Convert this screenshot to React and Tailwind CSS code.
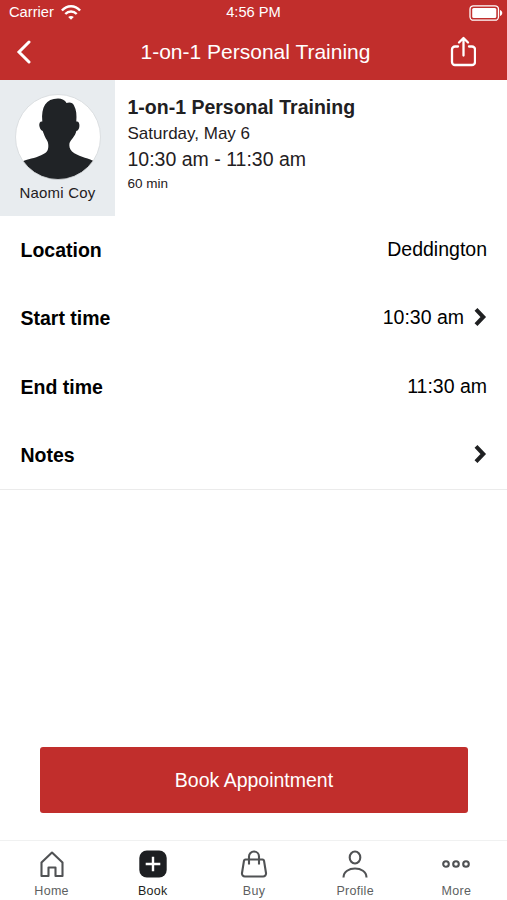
const details = [
  { label: "Location", value: "Deddington" },
  { label: "Start time", value: "10:30 am", arrow: true },
  { label: "End time", value: "11:30 am" },
  { label: "Notes", value: "", arrow: true },
]

function Chevron() {
  return (
    <svg className="ml-[10px] mb-[2px]" width="13" height="20" viewBox="0 0 13 20" fill="none"
      stroke="#1f2022" strokeWidth="4">
      <path d="M2 2.3 9.3 10 2 17.7" />
    </svg>
  )
}

function StatusBar() {
  return (
    <div className="grid grid-cols-3 items-center h-6 pt-px pl-[9px] pr-1 text-[14.7px] leading-none">
      <div className="flex items-center gap-[7px]">
        <span>Carrier</span>
        <svg width="20" height="15" viewBox="0 0 20 15" fill="none" stroke="white" strokeWidth="2.4">
          <path d="M.9 5.5C6-.2 14-.2 19.1 5.5" />
          <path d="M4.3 9c3.2-3.3 8.2-3.3 11.4 0" />
          <path d="M10 14.8 7.2 12c1.5-1.5 4.1-1.5 5.6 0Z" fill="white" stroke="none" />
        </svg>
      </div>
      <span className="text-center pr-[5px]">4:56 PM</span>
      <svg className="justify-self-end" width="34" height="16" viewBox="0 0 34 16">
        <rect x="1" y=".8" width="28.5" height="14.4" rx="3.5" fill="none" stroke="white" strokeWidth="1.3" />
        <rect x="3.2" y="3" width="24.1" height="10" rx="1.5" fill="white" />
        <path d="M31 5c3 .8 3 5.200 0 6Z" fill="white" />
      </svg>
    </div>
  )
}

function TitleBar() {
  return (
    <div className="grid grid-cols-[60px_1fr_60px] items-center h-14">
      <svg className="ml-4" width="16" height="24" viewBox="0 0 16 24" fill="none" stroke="white"
        strokeWidth="3" strokeLinecap="round">
        <path d="M13 2 3 12l10 10" />
      </svg>
      <h1 className="text-[21px] text-center pl-1">1-on-1 Personal Training</h1>
      <svg className="ml-[3px]" width="26" height="32" viewBox="0 0 26 32" fill="none" stroke="white"
        strokeWidth="2.3" strokeLinecap="round" strokeLinejoin="round">
        <path d="M8 10.500H5a3 3 0 0 0-3 3V26a3 3 0 0 0 3 3h17a3 3 0 0 0 3-3V13.500a3 3 0 0 0-3-3h-3" />
        <path d="M13.500 19.500V2.500M9 6.500 13.500 2 18 6.500" />
      </svg>
    </div>
  )
}

function Avatar() {
  return (
    <svg width="86" height="86" viewBox="0 0 86 86">
      <defs>
        <clipPath id="face"><circle cx="43" cy="43" r="42.500" /></clipPath>
      </defs>
      <circle cx="43" cy="43" r="42.500" fill="white" />
      <path clipPath="url(#face)" fill="#202326"
        d="M43 4.500C47 4.500 50 6 51.500 9C55 7.500 58 9 59 11.500C61.500 16 61.800 21 61.300 27.500C65.500 26.500 65.500 36 61.300 37C60.500 42 56 45.500 54.500 49C54 52 54.500 55 57 57.500C63 62.500 71 63.500 78 66.700L86 72V86H0V72L8.300 67C16 64 22 64 28.500 60C32.500 58 33.500 55.500 33.300 51C33.200 47 31.500 46 30 42.700C29 40.500 28.500 39 27.700 37C24 35.500 22.500 27 27.300 27.500C26 13 31 4.500 43 4.500Z" />
      <circle cx="43" cy="43" r="42.500" fill="none" stroke="#d5d9dc" strokeWidth=".8" />
    </svg>
  )
}

function TabIcon({ name }) {
  return (
    <svg width="30" height="30" viewBox="0 0 30 30" fill="none" stroke="#505254" strokeWidth="2.1">
      {name === "Home" && (
        <path strokeLinejoin="round" d="M4.500 27V13.500L15 3.500l10.500 10V27h-7v-8.500h-7V27Z" />
      )}
      {name === "Book" && (
        <>
          <rect x="1.300" y="1.500" width="27.400" height="27" rx="7.500" fill="#1d1f22" stroke="none" />
          <path d="M15 7.700v14.600M7.700 15h14.600" stroke="white" strokeWidth="2.400" />
        </>
      )}
      {name === "Buy" && (
        <>
          <path strokeLinejoin="round" d="M6.500 10.500h17a1.500 1.500 0 0 1 1.500 1.200L27 24a3 3 0 0 1-3 3.500H6A3 3 0 0 1 3 24l2-12.300a1.500 1.500 0 0 1 1.500-1.200Z" />
          <path d="M10 15.500V7.500a5 5 0 0 1 10 0v8" />
        </>
      )}
      {name === "Profile" && (
        <>
          <ellipse cx="15" cy="8.500" rx="5.300" ry="6" />
          <path d="M3.500 28.500c0-12 23-12 23 0" />
        </>
      )}
      {name === "More" && (
        <>
          <circle cx="5" cy="15" r="2.800" />
          <circle cx="15" cy="15" r="2.800" />
          <circle cx="25" cy="15" r="2.800" />
        </>
      )}
    </svg>
  )
}

function TabBar() {
  return (
    <nav className="grid grid-cols-5 h-[60px] pt-2 pl-px border-t border-[#f0f1f1]">
      {["Home", "Book", "Buy", "Profile", "More"].map((name) => (
        <div key={name} className="flex flex-col items-center gap-1">
          <TabIcon name={name} />
          <span className={`text-[12.5px] leading-4 tracking-[0.3px] ${name === "Book" ? "text-[#1d1f22]" : "text-[#5d5f61]"}`}>
            {name}
          </span>
        </div>
      ))}
    </nav>
  )
}

export default function App() {
  return (
    <div className="flex flex-col w-[507px] h-[900px] overflow-hidden bg-white text-[#1f2022] font-['Liberation_Sans',Arial,sans-serif]">
      {/* Header */}
      <header className="h-20 shrink-0 bg-[#c12e2c] text-white">
        <StatusBar />
        <TitleBar />
      </header>

      {/* Session summary */}
      <section className="flex h-[136px] shrink-0">
        <div className="flex flex-col items-center w-[115px] pt-[14px] bg-[#e8ecef]">
          <Avatar />
          <span className="mt-1 text-[15px] leading-[18px] tracking-[0.2px]">Naomi Coy</span>
        </div>
        <div className="pl-[12.5px] pt-[14px]">
          <h2 className="text-[19.5px] leading-[26px] font-bold">1-on-1 Personal Training</h2>
          <p className="text-[17px] leading-[28px]">Saturday, May 6</p>
          <p className="text-[19.5px] leading-[22px]">10:30 am - 11:30 am</p>
          <p className="text-[13.5px] leading-[28px]">60 min</p>
        </div>
      </section>

      {/* Details */}
      <section className="border-b border-[#ebebeb] text-black text-[19.5px]">
        {details.map((row) => (
          <div key={row.label} className="flex items-center justify-between h-[68.3px] pl-[20.5px] pr-5 pt-px">
            <span className="font-bold">{row.label}</span>
            <span className="flex items-center pb-0.5">
              {row.value}
              {row.arrow && <Chevron />}
            </span>
          </div>
        ))}
      </section>

      <div className="flex-1" />

      <button className="h-[66px] shrink-0 ml-10 mr-[39px] mb-[27px] pt-0.5 rounded-[3px] bg-[#c12e2c] text-white text-[19.5px]">
        Book Appointment
      </button>

      <TabBar />
    </div>
  )
}
